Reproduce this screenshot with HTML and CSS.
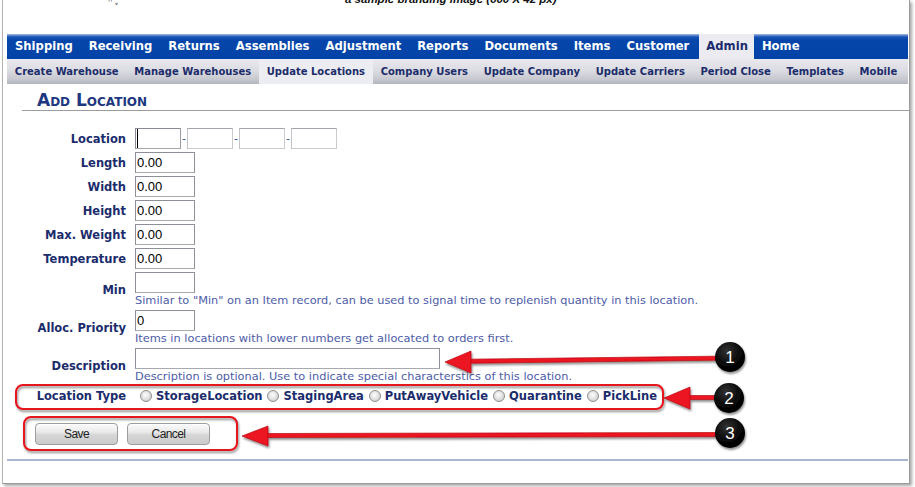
FILE: index.html
```html
<!DOCTYPE html>
<html lang="en">
<head>
<meta charset="utf-8">
<title>Add Location</title>
<link rel="stylesheet" href="styles.css">
</head>
<body>
<div class="window">
  <div class="brand">
    <span class="brand-bits">ˈˈ ᵥ</span>
    <span class="brand-text">a sample branding image (600 X 42 px)</span>
  </div>
  <nav class="mainnav">
    <a href="#">Shipping</a>
    <a href="#">Receiving</a>
    <a href="#">Returns</a>
    <a href="#">Assemblies</a>
    <a href="#">Adjustment</a>
    <a href="#">Reports</a>
    <a href="#">Documents</a>
    <a href="#">Items</a>
    <a href="#">Customer</a>
    <a href="#" class="active">Admin</a>
    <a href="#">Home</a>
  </nav>
  <nav class="subnav">
    <a href="#">Create Warehouse</a>
    <a href="#">Manage Warehouses</a>
    <a href="#" class="active">Update Locations</a>
    <a href="#">Company Users</a>
    <a href="#">Update Company</a>
    <a href="#">Update Carriers</a>
    <a href="#">Period Close</a>
    <a href="#">Templates</a>
    <a href="#">Mobile</a>
  </nav>
  <h1 class="title">Add Location</h1>
  <form class="form">
    <label class="label">Location</label>
    <div class="field loc">
      <input class="in part first" type="text" value="">
      <span class="dash">-</span>
      <input class="in part" type="text" value="">
      <span class="dash">-</span>
      <input class="in part" type="text" value="">
      <span class="dash">-</span>
      <input class="in part" type="text" value="">
    </div>

    <label class="label">Length</label>
    <div class="field"><input class="in num" type="text" value="0.00"></div>

    <label class="label">Width</label>
    <div class="field"><input class="in num" type="text" value="0.00"></div>

    <label class="label">Height</label>
    <div class="field"><input class="in num" type="text" value="0.00"></div>

    <label class="label">Max. Weight</label>
    <div class="field"><input class="in num" type="text" value="0.00"></div>

    <label class="label">Temperature</label>
    <div class="field"><input class="in num" type="text" value="0.00"></div>

    <label class="label">Min</label>
    <div class="field">
      <input class="in num" type="text" value="">
      <div class="help">Similar to "Min" on an Item record, can be used to signal time to replenish quantity in this location.</div>
    </div>

    <label class="label">Alloc. Priority</label>
    <div class="field">
      <input class="in num" type="text" value="0">
      <div class="help">Items in locations with lower numbers get allocated to orders first.</div>
    </div>

    <label class="label">Description</label>
    <div class="field">
      <input class="in desc" type="text" value="">
      <div class="help">Description is optional. Use to indicate special characterstics of this location.</div>
    </div>

    <label class="label">Location Type</label>
    <div class="field types">
      <span class="radio"></span><span class="opt">StorageLocation</span>
      <span class="radio"></span><span class="opt">StagingArea</span>
      <span class="radio"></span><span class="opt">PutAwayVehicle</span>
      <span class="radio"></span><span class="opt">Quarantine</span>
      <span class="radio"></span><span class="opt">PickLine</span>
    </div>
  </form>
  <div class="actions">
    <button class="btn" type="button">Save</button>
    <button class="btn" type="button">Cancel</button>
  </div>
  <div class="rule"></div>
</div>

<svg class="annot" width="915" height="487" viewBox="0 0 915 487">
  <defs>
    <filter id="sh" x="-10%" y="-30%" width="120%" height="180%">
      <feDropShadow dx="1" dy="2" stdDeviation="1.3" flood-color="#000" flood-opacity="0.45"/>
    </filter>
    <radialGradient id="ball" cx="40%" cy="30%" r="75%">
      <stop offset="0" stop-color="#333"/>
      <stop offset="0.6" stop-color="#080808"/>
      <stop offset="1" stop-color="#000"/>
    </radialGradient>
  </defs>
  <g filter="url(#sh)" fill="none" stroke="#e5121b" stroke-width="2">
    <rect x="16" y="385" width="647" height="24" rx="7"/>
    <rect x="24" y="417" width="213" height="33" rx="7"/>
  </g>
  <g filter="url(#sh)" fill="#ec1420" stroke="#b80c12" stroke-width="0.7">
    <path d="M468 359.2 L716 356.2 L716 360.2 L468 363.2 Z"/>
    <path d="M445 362 L471 351 L471 373 Z"/>
    <path d="M688 395.5 L716 395.5 L716 399.5 L688 399.5 Z"/>
    <path d="M664 398 L690 387 L690 409 Z"/>
    <path d="M266 433.5 L716 432.5 L716 436.5 L266 437.5 Z"/>
    <path d="M242 436 L268 426 L268 446 Z"/>
  </g>
  <g filter="url(#sh)">
    <circle cx="730" cy="357" r="15" fill="url(#ball)"/>
    <circle cx="729" cy="398" r="15" fill="url(#ball)"/>
    <circle cx="730" cy="433" r="15" fill="url(#ball)"/>
  </g>
  <g class="num-txt">
    <text x="730" y="363">1</text>
    <text x="729" y="404">2</text>
    <text x="730" y="439">3</text>
  </g>
</svg>
</body>
</html>
```

FILE: styles.css
```css
* { box-sizing: border-box; }

body {
  margin: 0;
  width: 915px;
  height: 487px;
  overflow: hidden;
  position: relative;
  background: #fff;
  font-family: "DejaVu Sans", Verdana, sans-serif;
}

.window {
  margin-left: 2px;
  width: 908px;
  height: 484px;
  background: #fff;
  border-left: 1px solid #b4b4b4;
  border-right: 1px solid #9a9a9a;
  border-bottom: 1px solid #9a9a9a;
  box-shadow: 2px 2px 3px rgba(0, 0, 0, 0.35);
}

/* branding strip (cut off at the top, as in the capture) */
.brand {
  height: 34px;
  overflow: hidden;
  display: flex;
  align-items: flex-start;
}
.brand-bits {
  margin-left: 105px;
  width: 12px;
  font: bold 7px/7px "DejaVu Sans", sans-serif;
  color: #666;
}
.brand-text {
  margin-left: 225px;
  margin-top: -7px;
  font: italic bold 11.5px/12px "Liberation Sans", Arial, sans-serif;
  color: #111;
  white-space: nowrap;
}

/* main navigation */
.mainnav {
  display: flex;
  height: 25px;
  margin: 0 1px 0 4px;
  background: linear-gradient(#afc5ec 0, #6f92d6 1px, #1a54b3 3px, #0646aa 6px, #0342a6 100%);
}
.mainnav a {
  padding: 0 8px;
  line-height: 25px;
  font-size: 11.6px;
  font-weight: bold;
  color: #fff;
  text-decoration: none;
  white-space: nowrap;
}
.mainnav a.active {
  background: #ebebf1;
  color: #1b2b6b;
  padding: 0 6px 0 7px;
  margin-left: 2px;
}

/* sub navigation */
.subnav {
  display: flex;
  height: 25px;
  margin: 0 1px 0 4px;
  background: linear-gradient(#e8e8ee 0, #dcdde3 45%, #c8c9d0 80%, #b2b4bc 100%);
}
.subnav a {
  padding: 0 7.8px;
  line-height: 25px;
  font-size: 10px;
  font-weight: bold;
  color: #1c2c6a;
  text-decoration: none;
  white-space: nowrap;
}
.subnav a.active {
  background: #ececf3;
}

/* page title */
.title {
  margin: 6px 0 0 19px;
  padding-left: 15px;
  height: 21px;
  border-bottom: 1px solid #9c9c9c;
  font: bold 17px/20px "DejaVu Sans", Verdana, sans-serif;
  font-variant: small-caps;
  color: #1d3781;
}

/* form */
.form {
  display: grid;
  grid-template-columns: 119px 1fr;
  column-gap: 9px;
  row-gap: 3px;
  margin: 17px 0 0 4px;
}
.label {
  align-self: center;
  text-align: right;
  font-size: 11.5px;
  font-weight: bold;
  color: #1b2c6c;
  white-space: nowrap;
}
.field { min-width: 0; }
.loc {
  display: flex;
  align-items: center;
}
.in {
  display: block;
  height: 21px;
  margin: 0;
  padding: 0 1px;
  border: 1px solid #8f8f99;
  border-bottom-color: #a9a9b0;
  background: #fff;
  font: 13px "Liberation Sans", Arial, sans-serif;
  color: #000;
  outline: none;
}
.part {
  width: 46px;
  border-color: #a3a3ab #cbcbcf #cbcbcf #c3c3c8;
}
.part.first {
  border-color: #8a8a94 #9a9aa2 #a6a6ac #8a8a94;
  box-shadow: inset 2px 0 0 -1px #fff, inset 3px 0 0 -1px #000;
}
.dash {
  width: 6px;
  text-align: center;
  font: 11px "DejaVu Sans", sans-serif;
  color: #2a50a0;
}
.num { width: 60px; }
.desc { width: 305px; }
.help {
  font-size: 11.35px;
  line-height: 14px;
  color: #4d5ca8;
  white-space: nowrap;
}

.types {
  display: flex;
  align-items: center;
  height: 20px;
  padding-left: 5px;
}
.radio {
  width: 12px;
  height: 12px;
  border-radius: 50%;
  border: 1px solid #8e8e8e;
  background: radial-gradient(circle at 45% 40%, #fdfdfd 0, #e4e4e4 45%, #c2c2c2 100%);
  margin-right: 4px;
  flex: none;
}
.opt {
  font-size: 11.5px;
  font-weight: bold;
  color: #1b2c6c;
  margin-right: 5px;
  white-space: nowrap;
}

/* buttons */
.actions {
  display: flex;
  gap: 9px;
  margin: 17px 0 0 32px;
}
.btn {
  width: 83px;
  height: 22px;
  padding: 0;
  border: 1px solid #9d9d9d;
  border-radius: 4px;
  background: linear-gradient(#fbfbfb 0, #eaeaea 40%, #d6d6d6 55%, #cbcbcb 100%);
  box-shadow: inset 0 1px 0 #fff;
  font: 12px "Liberation Sans", Arial, sans-serif;
  letter-spacing: -0.6px;
  color: #222;
}

.rule {
  height: 2px;
  margin: 14px 1px 0 4px;
  background: #a8b7cf;
}

/* annotation overlay */
.annot {
  position: absolute;
  left: 0;
  top: 0;
  pointer-events: none;
}
.num-txt text {
  font: 17px "Liberation Sans", Arial, sans-serif;
  fill: #fff;
  text-anchor: middle;
}
```
